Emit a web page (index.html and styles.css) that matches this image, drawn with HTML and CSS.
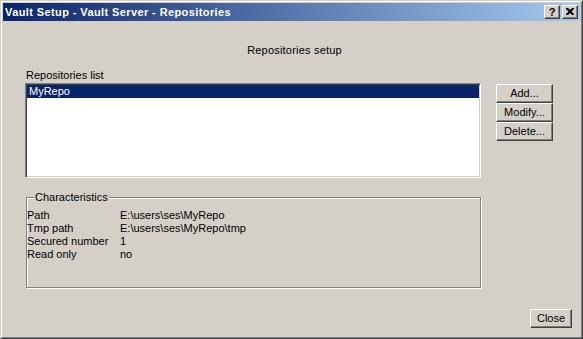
FILE: index.html
```html
<!DOCTYPE html>
<html>
<head>
<meta charset="utf-8">
<link rel="stylesheet" href="styles.css">
</head>
<body>
<div class="window">
  <div class="frame">
    <div class="titlebar">
      <span class="title">Vault Setup - Vault Server - Repositories</span>
      <div class="caption-buttons">
        <button class="cap-btn help">?</button>
        <button class="cap-btn close-x">
          <svg width="8" height="7" viewBox="0 0 8 7"><path d="M0 0h2l2 2 2-2h2v1L5.5 3.5 8 6v1H6L4 5 2 7H0V6l2.5-2.5L0 1z" fill="#000"/></svg>
        </button>
      </div>
    </div>
    <div class="client">
      <div class="heading">Repositories setup</div>
      <div class="main">
        <div class="list-col">
          <div class="label">Repositories list</div>
          <div class="listbox">
            <div class="item selected">MyRepo</div>
          </div>
        </div>
        <div class="btn-col">
          <button class="btn">Add...</button>
          <button class="btn">Modify...</button>
          <button class="btn">Delete...</button>
        </div>
      </div>
      <fieldset class="group">
        <legend>Characteristics</legend>
        <div class="props">
          <span>Path</span><span>E:\users\ses\MyRepo</span>
          <span>Tmp path</span><span>E:\users\ses\MyRepo\tmp</span>
          <span>Secured number</span><span>1</span>
          <span>Read only</span><span>no</span>
        </div>
      </fieldset>
      <div class="footer">
        <button class="btn close-btn">Close</button>
      </div>
    </div>
  </div>
</div>
</body>
</html>
```

FILE: styles.css
```css
* { box-sizing: border-box; }
html, body { margin: 0; padding: 0; background: #d4d0c8; }
body {
  font-family: "Liberation Sans", Arial, sans-serif;
  font-size: 11px;
  color: #000;
}
.window {
  width: 583px;
  height: 339px;
  border: 1px solid;
  border-color: #d4d0c8 #404040 #404040 #d4d0c8;
  background: #d4d0c8;
}
.frame {
  height: 100%;
  border: 1px solid;
  border-color: #fff #808080 #808080 #fff;
  padding: 1px;
  display: flex;
  flex-direction: column;
}
.titlebar {
  height: 18px;
  flex: none;
  background: linear-gradient(to right, #0a246a, #a6caf0);
  display: flex;
  align-items: center;
  padding-left: 2px;
  padding-right: 2px;
}
.title {
  flex: 1;
  color: #fff;
  font-weight: bold;
  font-size: 11px;
  letter-spacing: 0.4px;
  line-height: 18px;
  white-space: nowrap;
}
.caption-buttons { display: flex; gap: 2px; }
.cap-btn {
  width: 16px;
  height: 14px;
  padding: 0;
  margin: 0;
  background: #d4d0c8;
  border: 1px solid;
  border-color: #fff #404040 #404040 #fff;
  box-shadow: inset -1px -1px 0 #808080;
  display: flex;
  align-items: center;
  justify-content: center;
  font-family: "Liberation Sans", Arial, sans-serif;
  font-weight: bold;
  font-size: 11px;
  line-height: 12px;
  color: #000;
}
.cap-btn svg { display: block; margin-top: -1px; }
.client {
  flex: 1;
  display: flex;
  flex-direction: column;
}
.heading {
  text-align: center;
  line-height: 13px;
  margin-top: 23px;
  padding-left: 6px;
  letter-spacing: 0.2px;
}
.main {
  display: flex;
  margin-top: 12px;
  margin-left: 22px;
}
.list-col { width: 456px; }
.label { line-height: 13px; padding-left: 1px; margin-bottom: 1px; }
.listbox {
  height: 95px;
  background: #fff;
  border: 1px solid;
  border-color: #808080 #fff #fff #808080;
  box-shadow: inset 1px 1px 0 #404040, inset -1px -1px 0 #d4d0c8;
  padding: 1px;
}
.item {
  height: 13px;
  line-height: 13px;
  padding-left: 2px;
}
.item.selected { background: #0a246a; color: #fff; }
.btn-col {
  display: flex;
  flex-direction: column;
  margin-left: 15px;
  padding-top: 15px;
}
.btn {
  width: 57px;
  height: 19px;
  padding: 0;
  margin: 0;
  background: #d4d0c8;
  border: 1px solid;
  border-color: #fff #404040 #404040 #fff;
  box-shadow: inset -1px -1px 0 #808080;
  font-family: "Liberation Sans", Arial, sans-serif;
  font-size: 11px;
  color: #000;
  line-height: 15px;
}
.group {
  margin: 13px 0 0 23px;
  width: 455px;
  padding: 5px 0 26px 0;
  border: 1px solid #808080;
  box-shadow: inset 1px 1px 0 #fff, 1px 1px 0 #fff;
  min-inline-size: 0;
}
.group legend {
  margin-left: 7px;
  padding: 0 1px;
  line-height: 13px;
  background: #d4d0c8;
}
.props {
  display: grid;
  grid-template-columns: 93px auto;
  line-height: 13px;
}
.footer {
  margin-top: auto;
  display: flex;
  justify-content: flex-end;
  padding: 0 8px 8px 0;
}
.close-btn { width: 42px; }
```
